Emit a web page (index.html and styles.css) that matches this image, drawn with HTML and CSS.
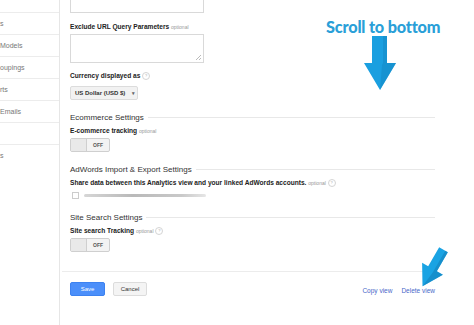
FILE: index.html
```html
<!DOCTYPE html>
<html lang="en">
<head>
  <meta charset="UTF-8" />
  <title>View Settings</title>
  <link rel="stylesheet" href="styles.css">
</head>
<body>

  <div class="page">
    <div class="sidebar">
      <div class="nav-item nav-top"></div>
      <div class="nav-item">s</div>
      <div class="nav-item">Models</div>
      <div class="nav-item">oupings</div>
      <div class="nav-item">rts</div>
      <div class="nav-item">Emails</div>
      <div class="nav-item"></div>
      <div class="nav-item nav-last">s</div>
    </div>

    <div class="main">
      <div class="box box-cut"></div>

      <div class="label first">Exclude URL Query Parameters <span class="opt">optional</span></div>
      <div class="box box-area"><span class="grip"></span></div>

      <div class="label">Currency displayed as <span class="help">?</span></div>
      <div class="select">US Dollar (USD $) <span class="caret">&#9662;</span></div>

      <div class="section"><span>Ecommerce Settings</span></div>
      <div class="label tight">E-commerce tracking <span class="opt">optional</span></div>
      <div class="toggle"><span class="knob"></span><span class="state">OFF</span></div>

      <div class="section"><span>AdWords Import &amp; Export Settings</span></div>
      <div class="label tight">Share data between this Analytics view and your linked AdWords accounts. <span class="opt">optional</span> <span class="help">?</span></div>
      <div class="check-row"><span class="check"></span><span class="blur"></span></div>

      <div class="section"><span>Site Search Settings</span></div>
      <div class="label tight">Site search Tracking <span class="opt">optional</span> <span class="help">?</span></div>
      <div class="toggle"><span class="knob"></span><span class="state">OFF</span></div>

      <div class="actions">
        <button class="btn btn-save">Save</button>
        <button class="btn btn-cancel">Cancel</button>
        <div class="links">
          <a href="#">Copy view</a>
          <a href="#">Delete view</a>
        </div>
      </div>
    </div>
  </div>

  <!-- annotations drawn over the screenshot -->
  <div class="note">Scroll to bottom</div>
  <svg class="arrow-big" width="40" height="56" viewBox="0 0 40 56">
    <polygon points="12,0 27,0 27,27 36,27 20,54 4,27 12,27" fill="#1a9fe0"/>
    <polygon points="23,0 27,0 27,27 36,27 20,54 22,29 23,27" fill="#1589c4" opacity="0.55"/>
  </svg>
  <svg class="arrow-small" width="36" height="46" viewBox="0 0 36 46">
    <g transform="translate(18 23) rotate(30)">
      <polygon points="-5,-21 5,-21 5,1 12,1 0,21 -12,1 -5,1" fill="#1aa3e3"/>
      <polygon points="2,-21 5,-21 5,1 12,1 0,21 2,4" fill="#1482bd" opacity="0.6"/>
    </g>
  </svg>

</body>
</html>
```

FILE: styles.css
```css
body {
  margin: 0;
  background: #fff;
  font-family: "Liberation Sans", Arial, sans-serif;
  color: #222;
  width: 474px;
  height: 325px;
  overflow: hidden;
  position: relative;
}
.page {
  display: flex;
  height: 325px;
}
.sidebar {
  width: 59px;
  border-right: 1px solid #e6e6e6;
  font-size: 7px;
  color: #777;
}
.nav-item {
  height: 21px;
  line-height: 21px;
  border-bottom: 1px solid #ececec;
  white-space: nowrap;
  overflow: hidden;
}
.nav-top {
  height: 12px;
}
.nav-last {
  border-bottom: none;
}
.main {
  width: 365px;
  padding-left: 10px;
}
.box {
  width: 134px;
  border: 1px solid #d9d9d9;
  box-sizing: border-box;
  position: relative;
}
.box-cut {
  height: 13px;
  border-top: none;
}
.box-area {
  height: 29px;
  margin-top: 2px;
}
.grip {
  position: absolute;
  right: 2px;
  bottom: 2px;
  width: 5px;
  height: 5px;
  background: linear-gradient(135deg, transparent 45%, #bbb 45%, #bbb 55%, transparent 55%, transparent 75%, #bbb 75%, #bbb 85%, transparent 85%);
}
.label {
  font-size: 6.6px;
  font-weight: bold;
  line-height: 10px;
  margin-top: 8px;
  white-space: nowrap;
}
.label.first {
  margin-top: 9px;
}
.label.tight {
  margin-top: 4px;
}
.opt {
  font-size: 5px;
  font-weight: normal;
  color: #999;
}
.help {
  display: inline-block;
  width: 6px;
  height: 6px;
  line-height: 6px;
  border: 1px solid #d4d4d4;
  border-radius: 50%;
  font-size: 4px;
  font-weight: normal;
  color: #aaa;
  text-align: center;
  vertical-align: middle;
}
.select {
  display: inline-block;
  margin-top: 2px;
  width: 68px;
  height: 14px;
  line-height: 13px;
  box-sizing: border-box;
  padding-left: 4px;
  border: 1px solid #dcdcdc;
  border-radius: 2px;
  background: #f2f2f2;
  font-size: 6px;
  font-weight: bold;
  color: #333;
}
.caret {
  font-size: 5px;
  color: #666;
  margin-left: 5px;
}
.section {
  display: flex;
  align-items: center;
  margin-top: 12px;
  height: 10px;
  font-size: 8px;
  color: #333;
}
.section::after {
  content: "";
  flex: 1;
  border-top: 1px solid #e8e8e8;
  margin-left: 4px;
}
.toggle {
  display: flex;
  margin-top: 2px;
  width: 40px;
  height: 14px;
  box-sizing: border-box;
  border: 1px solid #cfcfcf;
  border-radius: 2px;
  background: #f3f3f3;
}
.knob {
  width: 15px;
  border-right: 1px solid #cfcfcf;
  background: #e9e9e9;
}
.state {
  flex: 1;
  text-align: center;
  font-size: 5px;
  font-weight: bold;
  line-height: 12px;
  color: #555;
}
.check-row {
  display: flex;
  align-items: center;
  gap: 5px;
  margin-top: 2px;
  height: 10px;
  padding-left: 2px;
}
.check {
  width: 5px;
  height: 5px;
  border: 1px solid #ccc;
}
.blur {
  width: 122px;
  height: 3px;
  border-radius: 2px;
  background: linear-gradient(90deg, #d6d6d6, #b9b9b9 40%, #c9c9c9 80%, #e6e6e6);
  filter: blur(0.6px);
}
.actions {
  display: flex;
  align-items: center;
  gap: 8px;
  margin-top: 19px;
  padding-top: 10px;
  border-top: 1px solid #ececec;
  margin-left: -8px;
  padding-left: 8px;
}
.btn {
  height: 14px;
  padding: 0;
  font-family: inherit;
  font-size: 6px;
  border-radius: 2px;
}
.btn-save {
  width: 35px;
  border: 1px solid #3d82f0;
  background: #4b8ffa;
  color: #fff;
}
.btn-cancel {
  width: 34px;
  border: 1px solid #dcdcdc;
  background: #f4f4f4;
  color: #333;
}
.links {
  margin-left: auto;
  display: flex;
  gap: 9px;
  padding-top: 3px;
}
.links a {
  font-size: 6.5px;
  color: #4769c9;
  text-decoration: none;
}
.note {
  position: absolute;
  left: 326px;
  top: 17px;
  font-family: Lato, "Open Sans", sans-serif;
  font-weight: 900;
  font-size: 16.3px;
  color: #2a9fd8;
  letter-spacing: -0.2px;
}
.arrow-big {
  position: absolute;
  left: 360px;
  top: 36px;
}
.arrow-small {
  position: absolute;
  left: 415px;
  top: 245px;
}
```
